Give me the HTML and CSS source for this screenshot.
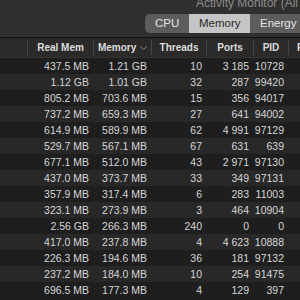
FILE: index.html
```html
<!DOCTYPE html>
<html lang="en">
<head>
    <meta charset="UTF-8">
    <title>Activity Monitor</title>
    <link rel="stylesheet" href="styles.css">
</head>
<body>
    <div class="window">
        <header class="toolbar">
            <div class="title">Activity Monitor (All Processes)</div>
            <div class="tabs">
                <span class="tab">CPU</span>
                <span class="tab active">Memory</span>
                <span class="tab">Energy</span>
                <span class="tab">Disk</span>
            </div>
        </header>

        <div class="table-head">
            <div class="th"></div>
            <div class="th">Real Mem</div>
            <div class="th">Memory
                <svg class="sort" width="7" height="4" viewBox="0 0 7 4"><polyline points="0.5,0.5 3.5,3.5 6.5,0.5" fill="none" stroke="#8a8a8a" stroke-width="1"/></svg>
            </div>
            <div class="th">Threads</div>
            <div class="th">Ports</div>
            <div class="th">PID</div>
            <div class="th th-left">Purgeable</div>
        </div>

        <div class="rows" id="rows"></div>
    </div>

    <script>
        const procs = [
            ['437.5 MB', '1.21 GB', '10', '3 185', '10728'],
            ['1.12 GB', '1.01 GB', '32', '287', '99420'],
            ['805.2 MB', '703.6 MB', '15', '356', '94017'],
            ['737.2 MB', '659.3 MB', '27', '641', '94002'],
            ['614.9 MB', '589.9 MB', '62', '4 991', '97129'],
            ['529.7 MB', '567.1 MB', '67', '631', '639'],
            ['677.1 MB', '512.0 MB', '43', '2 971', '97130'],
            ['437.0 MB', '373.7 MB', '33', '349', '97131'],
            ['357.9 MB', '317.4 MB', '6', '283', '11003'],
            ['323.1 MB', '273.9 MB', '3', '464', '10904'],
            ['2.56 GB', '266.3 MB', '240', '0', '0'],
            ['417.0 MB', '237.8 MB', '4', '4 623', '10888'],
            ['226.3 MB', '194.6 MB', '36', '181', '97132'],
            ['237.2 MB', '184.0 MB', '10', '254', '91475'],
            ['696.5 MB', '177.3 MB', '4', '129', '397']
        ];

        const rows = document.getElementById('rows');
        procs.forEach((p) => {
            const row = document.createElement('div');
            row.className = 'row';
            row.innerHTML = '<div class="td"></div>' +
                p.map((v) => `<div class="td">${v}</div>`).join('') +
                '<div class="td"></div>';
            rows.appendChild(row);
        });
    </script>
</body>
</html>
```

FILE: styles.css
```css
:root {
    --cols: 27px 66px 58px 55px 47px 35px 1fr;
    --text: #d6d6d6;
    --row-dark: #1e1e1e;
    --row-light: #282828;
}

* {
    box-sizing: border-box;
    margin: 0;
    padding: 0;
}

body {
    font-family: 'Liberation Sans', Arial, sans-serif;
    background: var(--row-dark);
    color: var(--text);
    overflow: hidden;
}

.window {
    width: 300px;
    height: 300px;
    overflow: hidden;
}

/* Toolbar */
.toolbar {
    height: 41px;
    background: #2f2f2f;
    border-bottom: 1px solid #111;
    white-space: nowrap;
}

.title {
    font-size: 12px;
    line-height: 13px;
    color: #8c8c8c;
    margin-top: -3px;
    padding-left: 196px;
}

.tabs {
    display: flex;
    margin: 4px 0 0 145px;
    height: 19px;
}

.tab {
    flex: none;
    font-size: 11.5px;
    line-height: 19px;
    color: #e4e4e4;
    background: #5c5c5c;
    padding: 0 10px;
    text-align: center;
}

.tab:first-child {
    width: 44px;
    border-radius: 5px 0 0 5px;
}

.tab.active {
    width: 61px;
    background: #c5c5c5;
    color: #2b2b2b;
}

/* Table */
.table-head {
    display: grid;
    grid-template-columns: var(--cols);
    height: 20px;
    padding: 2px 0;
    background: #2b2a29;
    border-bottom: 1px solid #353433;
    white-space: nowrap;
}

.th {
    font-size: 10px;
    font-weight: bold;
    line-height: 16px;
    color: #dcdcdc;
    text-align: center;
    overflow: hidden;
}

.th + .th {
    border-left: 1px solid #474747;
}

.th-left {
    text-align: left;
    padding-left: 8px;
}

.sort {
    margin-left: 1px;
    vertical-align: 1px;
}

.row {
    display: grid;
    grid-template-columns: var(--cols);
    height: 16px;
    background: var(--row-dark);
}

.row:nth-child(even) {
    background: var(--row-light);
}

.td {
    font-size: 10.5px;
    line-height: 16px;
    text-align: right;
    padding-right: 4px;
    white-space: nowrap;
}
```
